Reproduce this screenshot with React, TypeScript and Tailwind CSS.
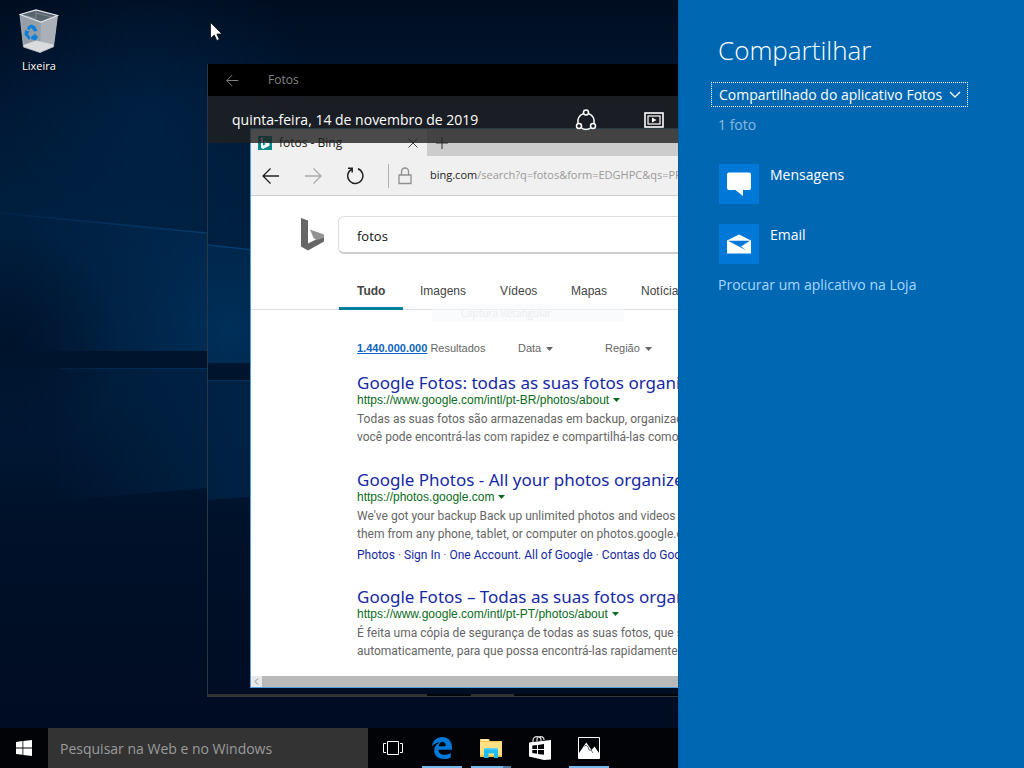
import React from "react";

type Result = {
  title: string;
  url: string;
  lines: [string, string];
  links?: string[];
};

const results: Result[] = [
  {
    title: "Google Fotos: todas as suas fotos organizadas",
    url: "https://www.google.com/intl/pt-BR/photos/about",
    lines: [
      "Todas as suas fotos são armazenadas em backup, organizadas",
      "você pode encontrá-las com rapidez e compartilhá-las como quiser",
    ],
  },
  {
    title: "Google Photos - All your photos organized",
    url: "https://photos.google.com",
    lines: [
      "We've got your backup Back up unlimited photos and videos for",
      "them from any phone, tablet, or computer on photos.google.com",
    ],
    links: ["Photos", "Sign In", "One Account. All of Google", "Contas do Google"],
  },
  {
    title: "Google Fotos – Todas as suas fotos organizadas",
    url: "https://www.google.com/intl/pt-PT/photos/about",
    lines: [
      "É feita uma cópia de segurança de todas as suas fotos, que são",
      "automaticamente, para que possa encontrá-las rapidamente e partilhá-las",
    ],
  },
];

function Wallpaper({ id, viewBox }: { id: string; viewBox: string }) {
  return (
    <svg
      className="absolute inset-0 h-full w-full"
      viewBox={viewBox}
      preserveAspectRatio="xMinYMin slice"
      aria-hidden="true"
    >
      <defs>
        <linearGradient id={id + "base"} x1="0" y1="0" x2="0" y2="728" gradientUnits="userSpaceOnUse">
          <stop offset="0" stopColor="#000d20" />
          <stop offset=".14" stopColor="#001733" />
          <stop offset=".3" stopColor="#001f3f" />
          <stop offset=".55" stopColor="#001a38" />
          <stop offset=".72" stopColor="#001129" />
          <stop offset="1" stopColor="#000c22" />
        </linearGradient>
        <radialGradient id={id + "glow"} gradientUnits="userSpaceOnUse" cx="230" cy="320" r="220">
          <stop offset="0" stopColor="#00335f" stopOpacity=".85" />
          <stop offset="1" stopColor="#00284e" stopOpacity="0" />
        </radialGradient>
        <radialGradient id={id + "top"} gradientUnits="userSpaceOnUse" cx="150" cy="120" r="170">
          <stop offset="0" stopColor="#002850" stopOpacity=".5" />
          <stop offset="1" stopColor="#002850" stopOpacity="0" />
        </radialGradient>
        <radialGradient id={id + "dark"} gradientUnits="userSpaceOnUse" cx="10" cy="345" r="110">
          <stop offset="0" stopColor="#000d22" stopOpacity=".6" />
          <stop offset="1" stopColor="#000d22" stopOpacity="0" />
        </radialGradient>
        <linearGradient id={id + "line"} gradientUnits="userSpaceOnUse" x1="0" y1="0" x2="260" y2="0">
          <stop offset="0" stopColor="#08437a" stopOpacity=".15" />
          <stop offset="1" stopColor="#08437a" stopOpacity=".85" />
        </linearGradient>
        <linearGradient id={id + "floor"} gradientUnits="userSpaceOnUse" x1="50" y1="0" x2="230" y2="0">
          <stop offset="0" stopColor="#002448" stopOpacity="0" />
          <stop offset="1" stopColor="#002448" stopOpacity=".8" />
        </linearGradient>
      </defs>
      <rect width="1400" height="1000" fill={`url(#${id}base)`} />
      <rect width="700" height="300" fill={`url(#${id}top)`} />
      <path d="M0 213L207 233L700 285V351H0Z" fill={`url(#${id}glow)`} />
      <path d="M0 213L207 233L700 285" fill="none" stroke={`url(#${id}line)`} strokeWidth="1.5" />
      <path d="M40 368H700V450L207 488L67 500L40 502Z" fill={`url(#${id}floor)`} />
      <rect width="700" height="728" fill={`url(#${id}dark)`} />
      <rect y="351" width="700" height="17" fill="#00142d" />
      <path d="M60 368.500H700" stroke={`url(#${id}line)`} strokeWidth="1" strokeOpacity=".6" />
    </svg>
  );
}

function RecycleBin() {
  return (
    <svg width="40" height="46" viewBox="0 0 40 46" aria-hidden="true">
      <path d="M1 5.500L4.500 38L21 43.500L34.500 37.500L38.500 6.500L22 13Z" fill="#969ea8" />
      <path d="M22 13L38.500 6.500L34.500 37.500L21 43.500Z" fill="#aab0b8" />
      <path d="M1 5.500L17 .8L38.500 6.500L22 13Z" fill="#59626f" />
      <path d="M17 1V9.500L6 6.600M17 4L33 8" fill="none" stroke="#7e8792" strokeWidth="1" />
      <path d="M4.300 36L17 31.500L34.700 35.500L34.500 38L21 43.500L4.500 38Z" fill="#d9dbdc" />
      <path d="M1 5.500L17 .8L38.500 6.500L22 13Z" fill="none" stroke="#e4e7ea" strokeWidth="1.200" />
      <path d="M1 5.500L4.500 38L21 43.500L34.500 37.500L38.500 6.500" fill="none" stroke="#b4bac1" strokeWidth=".8" />
      <g fill="#0a80db">
        <path d="M9 17.500L12 15.500L16 17L18.500 22L15 22.500L12 18.500L10.500 21L8 20Z" />
        <path d="M6 21L10.500 22.500L9 25L11.500 28.500L10 31L5.500 25.500Z" />
        <path d="M12.500 27L15.500 26V24L19 28L16.500 31.500L12 30Z" />
      </g>
    </svg>
  );
}

function Arrow({ className, flip = false, size = 18 }: { className: string; flip?: boolean; size?: number }) {
  return (
    <svg className={className} width={size} height={size} viewBox="0 0 18 18" fill="none" stroke="currentColor" strokeWidth="1.300" aria-hidden="true">
      {flip ? <path d="M1 9H17M9.500 1.500L17 9L9.500 16.500" /> : <path d="M17 9H1M8.500 1.500L1 9L8.500 16.500" />}
    </svg>
  );
}

function BrowserWindow() {
  return (
    <section className="flex h-[560px] flex-col border border-r-0 border-[#4d9fe0] bg-white">
      <div className="flex h-[27px] shrink-0 bg-[#ccc]">
        <div className="flex w-[176px] shrink-0 items-center bg-[#f0f0f0] pl-[7px]">
          <svg width="14" height="14" viewBox="0 0 14 14" aria-hidden="true">
            <rect width="14" height="14" fill="#008a8a" />
            <path d="M3 1.500L5 2.300V9.500L8 8L6.500 7.300L5.700 5L11.500 7.200V9.800L5 13L3 11.800Z" fill="#fff" />
          </svg>
          <span className="ml-[7px] flex-1 text-xs text-[#222]">fotos - Bing</span>
          <button aria-label="Fechar guia" className="mr-2 text-[#444]">
            <svg width="12" height="12" viewBox="0 0 12 12" stroke="currentColor" aria-hidden="true">
              <path d="M1.500 1.500L10.500 10.500M10.500 1.500L1.500 10.500" />
            </svg>
          </button>
        </div>
        <button aria-label="Nova guia" className="ml-2 text-[#333]">
          <svg width="14" height="14" viewBox="0 0 14 14" stroke="currentColor" aria-hidden="true">
            <path d="M7 1V13M1 7H13" />
          </svg>
        </button>
      </div>
      <div className="flex h-10 shrink-0 items-center border-b border-[#ccc] bg-[#f0f0f0]">
        <button aria-label="Voltar" className="ml-[11px] shrink-0"><Arrow className="text-[#222]" /></button>
        <button aria-label="Avançar" className="ml-6 shrink-0"><Arrow className="text-[#aaa]" flip /></button>
        <button aria-label="Atualizar" className="ml-6 shrink-0">
          <svg width="18" height="18" viewBox="0 0 18 18" fill="none" stroke="#222" strokeWidth="1.500" aria-hidden="true">
            <path d="M12 1.800A7.600 7.600 0 1 1 5.500 2.300M2 1.200H6.200V5.500" />
          </svg>
        </button>
        <span className="ml-6 h-6 w-px shrink-0 bg-[#b0b0b0]" />
        <svg className="ml-[9px] shrink-0" width="14" height="18" viewBox="0 0 14 18" fill="none" stroke="#909090" strokeWidth="1.300" aria-hidden="true">
          <path d="M1 8H13V16.500H1ZM3.500 8V4.500A3.500 3.500 0 0 1 10.500 4.500V8" />
        </svg>
        <span className="ml-[18px] whitespace-nowrap text-[11px] text-[#9a9a9a]">
          <span className="text-[#222]">bing.com</span>/search?q=fotos&amp;form=EDGHPC&amp;qs=PF
        </span>
      </div>
      <div className="relative min-h-0 flex-1 overflow-hidden">
        <div className="flex h-[58px] items-end">
          <svg className="mb-[3px] ml-[50px] shrink-0" width="24" height="33" viewBox="0 0 24 33" aria-hidden="true">
            <path d="M0 0L7 2.500V25.500L23 17.500V23.500L7 32.500L0 28.500Z" fill="#666" />
            <path d="M9 11.500L23 16.500V20L15.500 22L12.500 20Z" fill="#949494" />
          </svg>
          <input
            aria-label="Pesquisar"
            defaultValue="fotos"
            className="ml-[13px] h-[38px] min-w-0 flex-1 rounded-l-md border border-r-0 border-b-2 border-[#ddd] border-b-[#ccc] bg-white pt-[2px] pl-[18px] text-[13px] text-[#111] outline-none"
          />
        </div>
        <nav className="mt-[17px] flex h-[39px] border-b border-[#ddd] pl-[88px] font-['Liberation_Sans',sans-serif] text-xs leading-10 text-[#444]">
          <a href="#tudo" className="h-[39px] w-16 shrink-0 border-b-[3px] border-[#00809d] pl-[18px] font-bold">Tudo</a>
          <a href="#imagens" className="ml-[17px] w-20 shrink-0">Imagens</a>
          <a href="#videos" className="w-[71px] shrink-0">Vídeos</a>
          <a href="#mapas" className="w-[70px] shrink-0">Mapas</a>
          <a href="#noticias" className="shrink-0">Notícias</a>
        </nav>
        <div className="absolute top-[108px] left-[181px] flex h-[18px] w-[192px] items-center justify-center bg-[#f5f9fc]/60 pr-11 text-[10px] text-[#ededed]">
          Captura Retangular
        </div>
        <div className="pl-[106px] font-['Liberation_Sans',sans-serif]">
          <div className="flex h-[71px] items-center pt-[6px] text-[11px] text-[#666]">
            <span className="w-[161px] shrink-0"><a href="#resultados" className="font-bold text-[#0b66c0] underline">1.440.000.000</a> Resultados</span>
            <button className="flex w-[87px] shrink-0 items-center gap-[5px]">Data <Caret className="text-[#666]" /></button>
            <button className="flex shrink-0 items-center gap-[5px]">Região <Caret className="text-[#666]" /></button>
          </div>
          <div className="-mt-2 flex flex-col gap-6 whitespace-nowrap">
            {results.map((r) => (
              <article key={r.title}>
                <h2 className="font-['Noto_Sans',sans-serif] text-[17px] leading-[19px] text-[#1529a5]"><a href="#resultado">{r.title}</a></h2>
                <div className="flex h-4 items-center gap-1 text-xs text-[#0a6b20]">{r.url} <Caret className="text-[#0a6b20]" /></div>
                <p className="pt-[2px] font-[Roboto,sans-serif] text-xs leading-[18px] text-[#666]">{r.lines[0]}<br />{r.lines[1]}</p>
                {r.links && (
                  <div className="mt-1 flex h-4 items-center gap-[3px] font-[Roboto,sans-serif] text-xs text-[#1529a5]">
                    {r.links.map((l, i) => (
                      <React.Fragment key={l}>
                        {i > 0 && <span className="text-[#777]">·</span>}
                        <a href="#link">{l}</a>
                      </React.Fragment>
                    ))}
                  </div>
                )}
              </article>
            ))}
          </div>
        </div>
      </div>
      <div className="flex h-[11px] shrink-0 bg-[#b9b9b9]">
        <button aria-label="Rolar para a esquerda" className="flex w-[11px] items-center justify-center bg-[#e9e9e9]">
          <svg width="5" height="7" viewBox="0 0 5 7" fill="none" stroke="#888" aria-hidden="true"><path d="M4 .5L1 3.500L4 6.500" /></svg>
        </button>
      </div>
    </section>
  );
}

function Caret({ className }: { className: string }) {
  return (
    <svg className={className} width="7" height="4" viewBox="0 0 7 4" fill="currentColor" aria-hidden="true"><path d="M0 0H7L3.500 4Z" /></svg>
  );
}

function PhotosWindow() {
  return (
    <main className="absolute top-16 right-0 left-[207px] flex flex-col border-l border-[#2c3746]">
      <header className="flex h-8 items-center bg-black text-[#858585]">
        <button aria-label="Voltar" className="ml-[18px]"><Arrow className="text-[#8a8a8a]" size={13} /></button>
        <h1 className="ml-[29px] text-xs">Fotos</h1>
      </header>
      <div className="relative overflow-hidden pt-8 pb-[6px] pl-[42px]">
        <Wallpaper id="photo" viewBox="208 84 470 598" />
        <div className="relative"><BrowserWindow /></div>
        <div className="absolute inset-x-0 top-0 flex h-[47px] items-center bg-[#202020]/80 pl-6 text-white">
          <span className="flex-1 text-[14px]">quinta-feira, 14 de novembro de 2019</span>
          <button aria-label="Compartilhar" className="mr-[47px]">
            <svg width="22" height="22" viewBox="0 0 22 22" fill="none" stroke="currentColor" strokeWidth="1.500" aria-hidden="true">
              <circle cx="11" cy="3.500" r="2.500" /><circle cx="4" cy="17" r="2.500" /><circle cx="18" cy="17" r="2.500" />
              <path d="M8.300 4.600C4 6.500 2.200 10 3 14.500M13.700 4.600C18 6.500 19.800 10 19 14.500M6.500 19C9 21 13 21 15.500 19" />
            </svg>
          </button>
          <button aria-label="Apresentação de slides" className="mr-[14px]">
            <svg width="20" height="16" viewBox="0 0 20 16" fill="none" stroke="currentColor" aria-hidden="true">
              <rect x="1" y="1" width="18" height="14" strokeWidth="1.600" />
              <rect x="4" y="4" width="12" height="8" strokeWidth="1.200" />
              <path d="M8 5.500L12.500 8L8 10.500Z" fill="currentColor" stroke="none" />
            </svg>
          </button>
        </div>
      </div>
      <div className="flex h-[3px] border-b border-[#34373b] bg-[#02050b]">
        <span className="w-[219px] bg-[#303030]" />
        <span className="ml-11 w-[43px] bg-[#303030]" />
      </div>
    </main>
  );
}

function TaskButton({ label, children, active = false, split = false }: { label: string; children: React.ReactNode; active?: boolean; split?: boolean }) {
  return (
    <button aria-label={label} className="relative flex h-10 w-10 items-center justify-center">
      {children}
      {active && <span className="absolute inset-x-0 bottom-0 h-[2px] bg-[#76b9ed]" />}
      {split && <span className="absolute right-0 bottom-0 h-[2px] w-2 bg-[#4d7ba0]" />}
    </button>
  );
}

function Taskbar() {
  return (
    <footer className="relative flex h-10 shrink-0 bg-[#020307]">
      <button aria-label="Iniciar" className="flex w-12 shrink-0 items-center justify-center">
        <svg width="16" height="16" viewBox="0 0 16 16" fill="#fff" aria-hidden="true">
          <path d="M0 2L6.500 1.100V7.500H0ZM7.300 1L16 0V7.500H7.300ZM0 8.400H6.500V14.800L0 13.900ZM7.300 8.400H16V16L7.300 14.900Z" />
        </svg>
      </button>
      <input
        aria-label="Pesquisar na Web e no Windows"
        placeholder="Pesquisar na Web e no Windows"
        className="w-80 min-w-0 bg-[#333] pl-3 text-[14px] text-white outline-none placeholder:text-[#9b9b9b]"
      />
      <div className="flex shrink-0 items-center gap-[9px] pl-[5px]">
        <TaskButton label="Visão de tarefas">
          <svg width="20" height="14" viewBox="0 0 20 14" fill="none" stroke="#fff" aria-hidden="true">
            <path d="M4.500 .5H15.500V13.500H4.500ZM3 2.500H.5V11.500H3M17 2.500H19.500V11.500H17" />
          </svg>
        </TaskButton>
        <TaskButton label="Microsoft Edge" active>
          <svg width="20" height="22" viewBox="0 0 20 22" fill="#0078d7" aria-hidden="true">
            <path d="M0 9.500C.6 3.500 4.800 0 10.300 0C16.500 0 20 4.600 20 10V12.700H6.500C6.500 16 9 17.800 12.500 17.800C15 17.800 17 17.100 18.800 16V20.400C16.800 21.500 14.500 22 11.700 22C5.500 22 2.200 18.400 2.200 13.600C2.200 10 4.200 7.300 7.500 5.600C4.300 5.700 1.500 7.200 0 9.500ZM6.700 9.200H13.800C13.800 6.300 12.500 5 10.300 5C8.300 5 6.900 6.700 6.700 9.200Z" />
          </svg>
        </TaskButton>
        <TaskButton label="Explorador de Arquivos" active split>
          <svg width="22" height="20" viewBox="0 0 22 20" aria-hidden="true">
            <path d="M0 1H9L10 3H22V19H0Z" fill="#f6c54c" />
            <path d="M1 1.200H8.500V3H1Z" fill="#fff0ba" />
            <path d="M0 4H22V17H0Z" fill="#ffe085" />
            <path d="M4 10H18V20H14V15.500H8.500V20H4Z" fill="#20bdf0" />
            <path d="M4 10H18V11.500H4Z" fill="#61d2f6" />
          </svg>
        </TaskButton>
        <TaskButton label="Loja">
          <svg width="22" height="24" viewBox="0 0 22 24" aria-hidden="true">
            <path d="M0 6.500L22 4V23.500L15 24L0 20.500Z" fill="#fff" />
            <path d="M4 6V4.500C4 2 5.500 .7 8 .7C10.500 .7 12 2 12 4V5M8 5.500V3.500C8 1.500 9.500 .6 11.500 .6C13.500 .6 15 1.800 15 4" fill="none" stroke="#ddd" strokeWidth="1.200" />
            <path d="M3.300 9.600L8 9V12.900H3.300ZM9 8.900L15 8V12.900H9ZM3.300 13.900H8V17.700L3.300 17ZM9 13.900H15V18.800L9 17.900Z" fill="#020307" />
          </svg>
        </TaskButton>
        <TaskButton label="Fotos" active>
          <svg width="22" height="22" viewBox="0 0 22 22" aria-hidden="true">
            <path d="M.5 .5H21.500V21.500H.5Z" fill="#020307" stroke="#fff" />
            <path d="M1 16L8.300 5.500L13.500 13L16.500 9.500L21 16V21H1Z" fill="#fff" />
            <path d="M6.500 9.500L8 8L10 10L11 13L13.500 13.500L15 16" fill="none" stroke="#020307" strokeWidth=".6" />
          </svg>
        </TaskButton>
      </div>
    </footer>
  );
}

function SharePanel() {
  return (
    <aside className="w-[346px] shrink-0 border-l border-[#005a9e] bg-[#0067b3] pt-8 pl-8 text-white">
      <h2 className="pl-[7px] text-[26px] leading-9 font-light">Compartilhar</h2>
      <button className="mt-[14px] flex h-[25px] items-center border border-dotted border-white pr-[6px] pl-[7px] text-[14px] whitespace-nowrap">
        Compartilhado do aplicativo Fotos
        <svg className="ml-[7px]" width="12" height="8" viewBox="0 0 12 8" fill="none" stroke="currentColor" strokeWidth="1.300" aria-hidden="true"><path d="M1 1L6 6L11 1" /></svg>
      </button>
      <p className="mt-2 pl-[7px] text-[14px] leading-5 text-[#8cb9dc]">1 foto</p>
      <ul className="mt-[29px] flex flex-col gap-5 pl-2 text-[14px]">
        <li>
          <button className="flex gap-[11px]">
            <span className="flex h-10 w-10 items-center justify-center bg-[#0078d7]">
              <svg width="24" height="24" viewBox="0 0 24 24" fill="#fff" aria-hidden="true">
                <path d="M2 .5H22Q24 .5 24 2.500V16Q24 18 22 18H16V24L8.500 18H2Q0 18 0 16V2.500Q0 .5 2 .5Z" />
              </svg>
            </span>
            <span className="leading-[22px]">Mensagens</span>
          </button>
        </li>
        <li>
          <button className="flex gap-[11px]">
            <span className="flex h-10 w-10 items-center justify-center bg-[#0078d7]">
              <svg width="24" height="20" viewBox="0 0 24 20" aria-hidden="true">
                <path d="M0 6.500L12 .5L24 6.500V19.500H0Z" fill="#fff" />
                <path d="M1 6.800H23L14 12.500L19.500 16.500Z" fill="#0078d7" />
              </svg>
            </span>
            <span className="leading-[22px]">Email</span>
          </button>
        </li>
      </ul>
      <a href="#loja" className="mt-[10px] block pl-[7px] text-[14px] leading-[22px] text-[#a6d8ff]">Procurar um aplicativo na Loja</a>
    </aside>
  );
}

export default function App() {
  return (
    <div className="flex h-screen overflow-hidden bg-[#000c22] font-['Open_Sans','Noto_Sans',sans-serif]">
      <div className="flex min-w-0 flex-1 flex-col">
        <div className="relative min-h-0 flex-1 overflow-hidden">
          <Wallpaper id="desk" viewBox="0 0 678 728" />
          <button className="absolute top-[9px] left-[1px] flex w-[76px] flex-col items-center gap-[3px] text-[11px] leading-4 text-white [text-shadow:1px_1px_2px_#000]">
            <RecycleBin />
            Lixeira
          </button>
          <PhotosWindow />
          <svg className="absolute top-[22px] left-[210px]" width="13" height="19" viewBox="0 0 13 19" aria-hidden="true">
            <path d="M.5 .5V16.500L4.300 13L6.800 18.500L9.300 17.400L6.900 12H12Z" fill="#fff" stroke="#000" strokeWidth=".7" />
          </svg>
        </div>
        <Taskbar />
      </div>
      <SharePanel />
    </div>
  );
}
